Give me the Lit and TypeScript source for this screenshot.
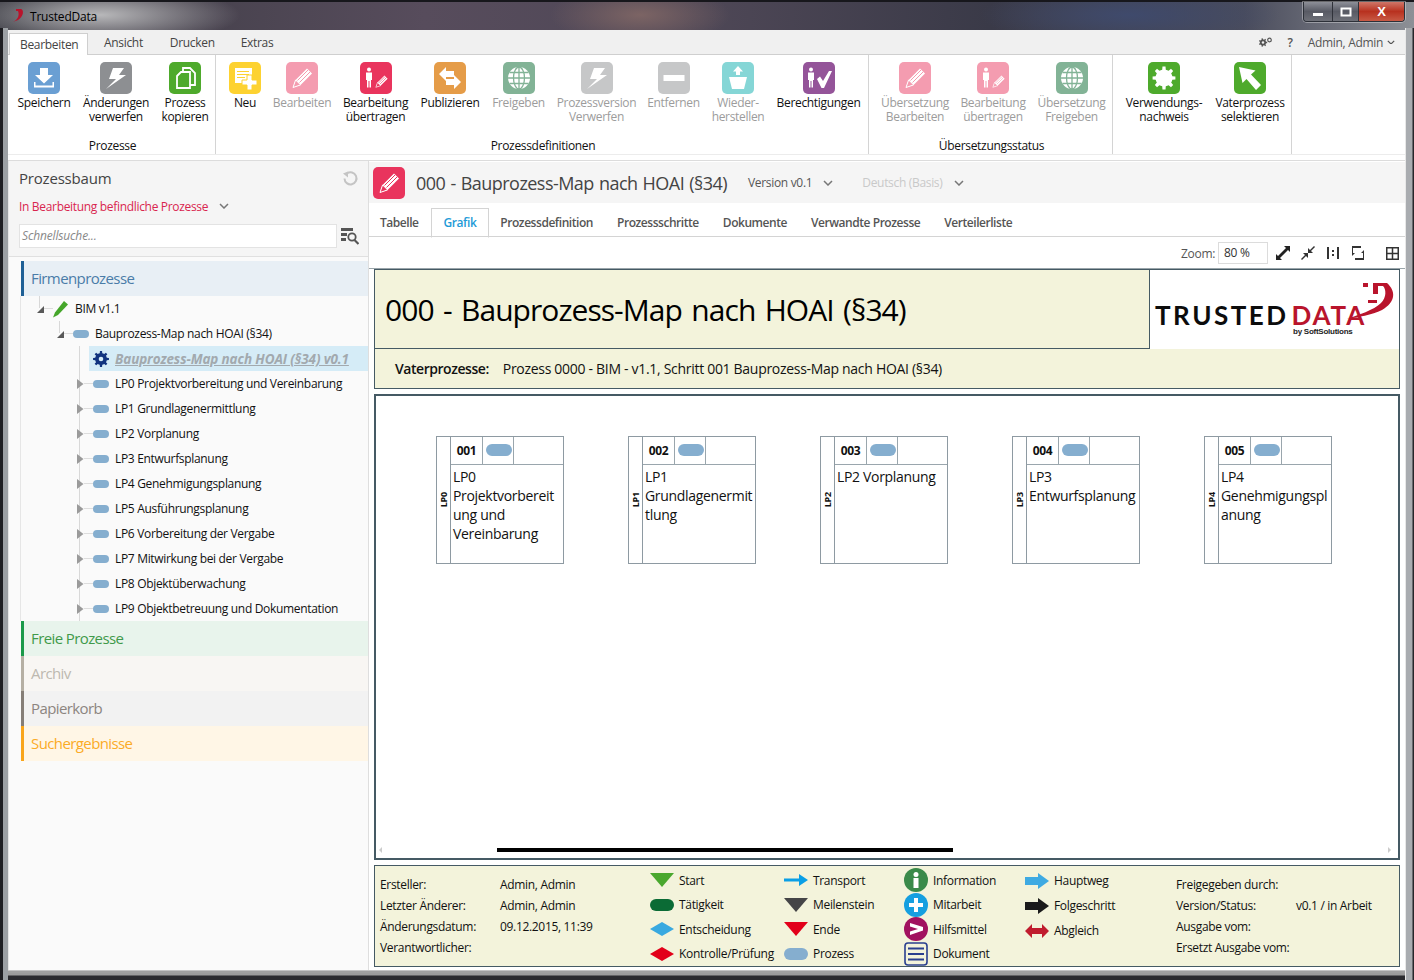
import { LitElement, html, css, svg } from "lit";
import { customElement } from "lit/decorators.js";

const gearPath = (cx: number, cy: number, r: number, teeth: number) => {
  const pts: string[] = [];
  const step = (Math.PI * 2) / teeth;
  for (let i = 0; i < teeth; i++) {
    const a = i * step;
    const ro = r, ri = r * 0.74;
    const p = [
      [ri, a - step * 0.5], [ri, a - step * 0.27], [ro, a - step * 0.17], [ro, a + step * 0.17], [ri, a + step * 0.27],
    ];
    for (const [rr, t] of p) pts.push(`${(cx + rr * Math.cos(t)).toFixed(2)},${(cy + rr * Math.sin(t)).toFixed(2)}`);
  }
  return pts.join(" ");
};

const pencil = (c: string) => svg`<path d="M7 25.5l2.6-7.6L21 6.5l5 5-11.4 11.4z" fill="#fff"/><path d="M7 25.5l2.6-7.6 5 5z" fill="${c}" stroke="#fff"/><path d="M11.5 18.5L22 8M13.5 20.500L24 10" stroke="${c}" stroke-width="1"/>`;
const person = (x = 0) => svg`<g transform="translate(${x} 0)" fill="#fff"><circle cx="9" cy="7.500" r="2"/><path d="M6 10.500h6v7.500h-1v7.500H9.500V19h-1v6.500H7V18H6z"/></g>`;
const globe = (c: string) => svg`<circle cx="16" cy="16" r="11" fill="#fff"/><g fill="none" stroke="${c}" stroke-width="1.300"><ellipse cx="16" cy="16" rx="5.500" ry="11"/><path d="M16 5v22M5 16h22M6.500 10.500h19M6.500 21.500h19"/></g>`;
const bolt = svg`<path d="M13 6h11l-5 7h7L6 27l10-10H9z" fill="#fff"/>`;

const tiles: Record<string, (c: string) => unknown> = {
  save: () => svg`<path d="M12 6h8v7h5l-9 8.500L7 13h5z" fill="#fff"/><path d="M6 20v5.500h20V20h-1.500v3.500h-17V20z" fill="#fff"/>`,
  bolt: () => bolt,
  copy: () => svg`<g fill="none" stroke="#fff" stroke-width="1.800"><path d="M14 10V6h7l5 5v12h-5"/><path d="M8 14l4-4h9v16H8z" fill="none"/></g>`,
  neu: (c) => svg`<path d="M6 6h17v15H6z" fill="#fff"/><path d="M8 9.500h12M8 12.500h12M8 15.500h8" stroke="${c}" stroke-width="1.200"/><path d="M18 13h5v5h5v5h-5v5h-5v-5h-5v-5h5z" fill="#fff" stroke="${c}" stroke-width="1"/>`,
  pencil: (c) => pencil(c),
  personpen: (c) => svg`${person(0)}<g transform="translate(11.500 9.500) scale(.62)">${pencil(c)}</g>`,
  publish: () => svg`<path d="M5 12l7-7v4h8v6h-8v4z" fill="#fff"/><path d="M27 20l-7 7v-4h-8v-6h8v-4z" fill="#fff"/>`,
  globe: (c) => globe(c),
  minus: () => svg`<rect x="5.500" y="13" width="21" height="6" fill="#fff"/>`,
  restore: () => svg`<path d="M16 4l5 5.500h-3V13h-4V9.500h-3z" fill="#fff"/><path d="M7 15h18l-3 12H10z" fill="#fff"/>`,
  perm: () => svg`${person(-1)}<path d="M14 17l3-2.500 3 4.500 6-10h3l-8 17h-2.500z" fill="#fff"/>`,
  gear: () => svg`<polygon points="${gearPath(16, 16, 11.500, 8)}" fill="#fff"/>`,
  cursor: () => svg`<path d="M5 5l16.500 3.500-4.500 4 10 10.500-5 5-9.500-11-4 4z" fill="#fff"/>`,
};

type Item = { w: number; color: string; icon: string; lines: string[]; off?: boolean };
const groups: { w: number; pad: number; label: string; items: Item[] }[] = [
  { w: 208, pad: 10, label: "Prozesse", items: [
    { w: 52, color: "#6a9fd3", icon: "save", lines: ["Speichern"] },
    { w: 66, color: "#8d8f92", icon: "bolt", lines: ["Änderungen", "verwerfen"] },
    { w: 46, color: "#4eaa2c", icon: "copy", lines: ["Prozess", "kopieren"] },
  ]},
  { w: 653, pad: 13, label: "Prozessdefinitionen", items: [
    { w: 32, color: "#fdd231", icon: "neu", lines: ["Neu"] },
    { w: 56, color: "#f49cb0", icon: "pencil", lines: ["Bearbeiten"], off: true },
    { w: 65, color: "#e9345d", icon: "personpen", lines: ["Bearbeitung", "übertragen"] },
    { w: 58, color: "#e59c48", icon: "publish", lines: ["Publizieren"] },
    { w: 53, color: "#82b396", icon: "globe", lines: ["Freigeben"], off: true },
    { w: 77, color: "#c6c7c8", icon: "bolt", lines: ["Prozessversion", "Verwerfen"], off: true },
    { w: 51, color: "#c6c7c8", icon: "minus", lines: ["Entfernen"], off: true },
    { w: 52, color: "#85d6d6", icon: "restore", lines: ["Wieder-", "herstellen"], off: true },
    { w: 83, color: "#945499", icon: "perm", lines: ["Berechtigungen"] },
  ]},
  { w: 244, pad: 13, label: "Übersetzungsstatus", items: [
    { w: 66, color: "#f49cb0", icon: "pencil", lines: ["Übersetzung", "Bearbeiten"], off: true },
    { w: 64, color: "#f49cb0", icon: "personpen", lines: ["Bearbeitung", "übertragen"], off: true },
    { w: 67, color: "#82b396", icon: "globe", lines: ["Übersetzung", "Freigeben"], off: true },
  ]},
  { w: 179, pad: 12, label: "", items: [
    { w: 78, color: "#4eaa2c", icon: "gear", lines: ["Verwendungs-", "nachweis"] },
    { w: 68, color: "#4eaa2c", icon: "cursor", lines: ["Vaterprozess", "selektieren"] },
  ]},
];

const steps = [
  { id: "001", lp: "LP0", lines: ["LP0", "Projektvorbereit", "ung und", "Vereinbarung"] },
  { id: "002", lp: "LP1", lines: ["LP1", "Grundlagenermit", "tlung"] },
  { id: "003", lp: "LP2", lines: ["LP2 Vorplanung"] },
  { id: "004", lp: "LP3", lines: ["LP3", "Entwurfsplanung"] },
  { id: "005", lp: "LP4", lines: ["LP4", "Genehmigungspl", "anung"] },
];

const treeLeaves = [
  "LP0 Projektvorbereitung und Vereinbarung", "LP1 Grundlagenermittlung", "LP2 Vorplanung", "LP3 Entwurfsplanung",
  "LP4 Genehmigungsplanung", "LP5 Ausführungsplanung", "LP6 Vorbereitung der Vergabe", "LP7 Mitwirkung bei der Vergabe",
  "LP8 Objektüberwachung", "LP9 Objektbetreuung und Dokumentation",
];

const chev = (w = 10) => html`<svg class="chev" viewBox="0 0 10 6" width=${w} height=${(w * 6) / 10}><path d="M1 1l4 4 4-4" fill="none" stroke="currentColor" stroke-width="1.500"/></svg>`;
const triOpen = html`<svg class="tri" viewBox="0 0 8 10"><path d="M8 2v7H1z" fill="#595959"/></svg>`;
const triClosed = html`<svg class="tri" viewBox="0 0 8 10"><path d="M1 0l6.500 5L1 10z" fill="#9a9a9a"/></svg>`;
const pill = html`<span class="pill"></span>`;

const legendIcons: Record<string, unknown> = {
  start: svg`<path d="M0 0h24L12 14z" fill="#4aa82e"/>`,
  act: svg`<rect y="1" width="24" height="12" rx="6" fill="#0b6b35"/>`,
  dec: svg`<path d="M0 7l12-7 12 7-12 7z" fill="#39a9e0"/>`,
  chk: svg`<path d="M0 7l12-7 12 7-12 7z" fill="#e2001a"/>`,
  trans: svg`<path d="M0 5.500h15V1l9 6-9 6V8.500H0z" fill="#0a9fe6"/>`,
  mile: svg`<path d="M0 0h24L12 14z" fill="#454547"/>`,
  end: svg`<path d="M0 0h24L12 14z" fill="#e2001a"/>`,
  proc: svg`<rect y="1" width="24" height="12" rx="6" fill="#85aecf"/>`,
  main: svg`<path d="M0 3h13V-1l11 8-11 8v-4H0z" fill="#3eaae2"/>`,
  next: svg`<path d="M0 3h13V-1l11 8-11 8v-4H0z" fill="#1a1a1a"/>`,
  sync: svg`<path d="M0 7l7-7v4h10V0l7 7-7 7v-4H7v4z" fill="#c01c2e"/>`,
};
const circleIcons: Record<string, unknown> = {
  info: svg`<circle cx="12" cy="12" r="12" fill="#3a8a4a"/><circle cx="12" cy="6.500" r="2.500" fill="#fff"/><rect x="9.500" y="10" width="5" height="10" fill="#fff"/>`,
  staff: svg`<circle cx="12" cy="12" r="12" fill="#159fe0"/><path d="M10 5h4v5h5v4h-5v5h-4v-5H5v-4h5z" fill="#fff"/>`,
  tool: svg`<circle cx="12" cy="12" r="12" fill="#a1115f"/><path d="M6 6l13 4v3.500L6 18v-3.500L14 12 6 9.500z" fill="#fff"/>`,
  doc: svg`<rect x="1" y="1" width="22" height="22" rx="3" fill="none" stroke="#2a3f8f" stroke-width="1.600"/><path d="M4 6.500h16M4 12h16M4 17.500h16" stroke="#2a3f8f" stroke-width="1.800"/>`,
};

@customElement("app-root")
export class AppRoot extends LitElement {
  static styles = css`
    :host { display: block; width: 1414px; height: 980px; overflow: hidden; position: relative; font-family: "Open Sans", "Noto Sans", sans-serif; font-size: 12px; letter-spacing: -0.32px; color: #111;
      background: radial-gradient(ellipse 140px 30px at 100px 15px, #b8b8ba 0, rgba(184,184,186,0) 100%), radial-gradient(ellipse 90px 30px at 640px 15px, #7c6464 0, rgba(124,100,100,0) 100%), radial-gradient(ellipse 150px 30px at 1130px 15px, #3f4a6c 0, rgba(63,74,108,0) 100%), linear-gradient(90deg, #3a3a42 0, #574c5c 30%, #4e4756 50%, #3a3a48 70%, #4a4c5c 88%, #8d9096 100%); }
    .frame-l, .frame-r { position: absolute; top: 28px; bottom: 0; }
    .frame-l { left: 0; width: 8px; background: linear-gradient(90deg, #1e1e22 0 3px, #9ca0a4 3px 8px); }
    .frame-r { right: 0; width: 9px; background: linear-gradient(90deg, #e8e8e8 0 1px, #a9acb0 1px 7px, #26262a 8px); }
    .frame-b { position: absolute; left: 8px; right: 9px; top: 970px; height: 10px; background: linear-gradient(#c4c4c4 0 1px, #a0a0a0 1px 3px, #9c9c9c 3px 5px, #2b2b2f 6px); }
    .title { height: 30px; display: flex; align-items: flex-start; padding-left: 13px; box-sizing: border-box; border-top: 2px solid #17171c; }
    .title .lg { margin: 6px 5px 0 0; }
    .title span { margin-top: 6px; color: #000; font-size: 12px; letter-spacing: -.2px; }
    .wc { margin-left: auto; margin-right: 9px; display: flex; height: 19px; border: 1px solid #2c3038; border-top: 0; border-radius: 0 0 4px 4px; overflow: hidden; box-shadow: 0 0 0 1px rgba(255,255,255,.35); }
    .wc div { display: flex; align-items: center; justify-content: center; background: linear-gradient(#8d8f98, #585a64 50%, #6e7078); border-right: 1px solid #30323a; }
    .wc .m { width: 28px; } .wc .m2 { width: 25px; } .wc .c { width: 45px; border: 0; background: linear-gradient(#cf7668, #b8311f 50%, #c85a45); color: #fff; font: bold 13px "Liberation Sans", sans-serif; }
    .client { position: absolute; left: 8px; top: 30px; width: 1397px; height: 940px; background: #fff; display: flex; flex-direction: column; }
    .menu { height: 25px; box-sizing: border-box; background: #f0f0f0; border-bottom: 1px solid #cfcfcf; display: flex; align-items: flex-end; color: #444; }
    .mt { height: 24px; line-height: 26px; padding: 0 13px; margin-right: 3px; }
    .mt.a { background: #fff; border: 1px solid #cfcfcf; border-bottom: 0; height: 22px; margin-left: 1px; margin-bottom: -1px; width: 79px; box-sizing: border-box; padding: 0 0 0 10px; line-height: 21px; }
    .mt.d { padding-left: 11px; } .mt.e { padding-left: 10px; }
    .mr { margin-left: auto; display: flex; align-items: center; height: 24px; padding-right: 10px; color: #555; }
    .mr .q { margin: 0 15px 0 16px; font-weight: 600; }
    .mr .u { margin-right: 4px; }
    .ribbon { height: 99px; display: flex; border-bottom: 1px solid #ececec; box-sizing: content-box; }
    .grp { box-sizing: border-box; border-right: 1px solid #d4d4d4; display: flex; flex-direction: column; position: relative; }
    .gi { display: flex; gap: 13px; height: 83px; padding-top: 7px; box-sizing: border-box; }
    .gl { text-align: center; height: 16px; line-height: 16px; color: #111; padding-left: 2px; }
    .rb { display: flex; flex-direction: column; align-items: center; line-height: 14px; text-align: center; white-space: nowrap; flex: none; }
    .rb svg { flex: none; margin-bottom: 2px; }
    .rb.off { color: #9c9c9c; }
    .gap { height: 5px; border-bottom: 1px solid #dcdcdc; }
    .main { flex: 1; display: grid; grid-template-columns: 361px 1fr; min-height: 0; }
    .left { background: #fafafa; border-right: 1px solid #dedede; border-left: 1px solid #e6e6e6; box-sizing: border-box; }
    .lh { background: #f5f5f5; height: 96px; box-sizing: border-box; border-bottom: 1px solid #e0e0e0; padding: 6px 9px 0 10px; }
    .lh .t { display: flex; justify-content: space-between; align-items: center; font-size: 15px; color: #444; height: 22px; letter-spacing: -.2px; }
    .lh .f { display: flex; align-items: center; gap: 11px; color: #d9254f; height: 20px; margin-top: 7px; }
    .lh .f .chev { color: #777; }
    .lh .s { display: flex; align-items: center; margin-top: 8px; gap: 4px; }
    .inp { width: 318px; height: 24px; box-sizing: border-box; background: #fff; border: 1px solid #e3e3e3; font-style: italic; color: #888; padding-left: 2px; line-height: 22px; font-size: 12px; letter-spacing: -.15px; }
    .sec { margin-left: 12px; height: 35px; box-sizing: border-box; border-left: 3px solid; padding-left: 7px; font-size: 15px; line-height: 34px; letter-spacing: -.6px; }
    .s1 { background: #e8eff5; border-color: #1f6096; color: #4a7ca8; margin-top: 4px; }
    .s2 { background: #e8f4ec; border-color: #1a9a4a; color: #3f9a4a; }
    .s3 { background: #f8f6f3; border-color: #b5afa3; color: #bdb9b0; }
    .s4 { background: #f2f2f2; border-color: #857e77; color: #8c8580; }
    .s5 { background: #fff6e6; border-color: #f9a51a; color: #fbab26; }
    .tree { margin-left: 11px; border-left: 1px solid #e6e6e6; position: relative; height: 325px; }
    .vl { position: absolute; width: 0; border-left: 1px solid #d8d8d8; }
    .v1 { left: 18px; top: 0; height: 12px; } .v2 { left: 38px; top: 25px; height: 12px; } .v3 { left: 58px; top: 50px; height: 275px; }
    .row { height: 25px; display: flex; align-items: center; position: relative; color: #111; white-space: nowrap; }
    .l1 { padding-left: 15px; } .l2 { padding-left: 35px; } .l3 { padding-left: 55px; }
    .tri { width: 8px; height: 10px; flex: none; }
    .dash { width: 9px; border-top: 1px solid #ddd; flex: none; }
    .pill { display: inline-block; width: 16px; height: 8px; border-radius: 4px; background: #85aecf; flex: none; }
    .row .tx { margin-left: 6px; }
    .sel { margin-left: 68px; background: #d5ecf7; padding-left: 4px; }
    .sel .tx { font-weight: 700; font-style: italic; text-decoration: underline; color: #a2a9ae; font-size: 13.500px; letter-spacing: -.12px; }
    .right { display: flex; flex-direction: column; min-width: 0; }
    .dh { height: 41px; background: #f5f5f5; display: flex; align-items: center; padding-left: 4px; flex: none; margin-top: 1px; }
    .dh .ti { font-size: 18px; margin-left: 11px; color: #444; letter-spacing: -.54px; word-spacing: 1px; }
    .dh .v { margin-left: 21px; color: #555; }
    .dh .chev { margin-left: 11px; color: #777; }
    .dh .lang { margin-left: 29px; color: #c9c9c9; }
    .tabs { height: 34px; flex: none; box-sizing: border-box; border-bottom: 1px solid #d4d4d4; padding: 5px 0 0 11px; display: flex; font-weight: 600; color: #555; letter-spacing: -.45px; }
    .tab { margin-right: 24px; line-height: 29px; white-space: nowrap; }
    .tab.a { border: 1px solid #d4d4d4; border-bottom: 1px solid #fff; height: 28px; box-sizing: content-box; margin: 0 11px 0 0; padding: 0 12px; color: #1f9bd7; line-height: 28px; }
    .tab.f { margin-right: 12px; }
    .tb { height: 32px; flex: none; box-sizing: border-box; border-bottom: 1px solid #9aa5aa; display: flex; align-items: center; justify-content: flex-end; padding: 1px 6px 0 0; color: #555; }
    .zi { width: 50px; height: 22px; box-sizing: border-box; border: 1px solid #dcdcdc; margin: 0 8px 0 3px; padding-left: 5px; line-height: 19px; color: #333; }
    .tb svg { margin-right: 11px; flex: none; }
    .tb svg.last { margin: 0 0 0 10px; }
    .hb { margin: 0 5px; height: 120px; flex: none; box-sizing: border-box; border: 1px solid #455a64; background: #f3f3db; display: flex; flex-direction: column; }
    .hu { display: flex; height: 79px; flex: none; }
    .ht { flex: 1; border-right: 1px solid #455a64; border-bottom: 1px solid #455a64; font-size: 30px; line-height: 80px; padding-left: 10px; color: #000; letter-spacing: -.95px; word-spacing: 2.500px; box-sizing: border-box; }
    .logo { width: 249px; flex: none; background: #fff; position: relative; box-sizing: border-box; }
    .logo svg { position: absolute; inset: 0; }
    .logo .lt { position: absolute; left: 5px; top: 35px; font-size: 26px; line-height: 20px; letter-spacing: 2.500px; font-family: Lato, "Liberation Sans", sans-serif; font-weight: 700; color: #0c0c0c; white-space: nowrap; }
    .logo .lt b { font-weight: 700; color: #b9142c; margin-left: 3px; letter-spacing: 1.800px; }
    .logo .by { position: absolute; left: 143px; top: 57px; font: bold 8px "Liberation Sans", sans-serif; letter-spacing: -.25px; color: #222; }
    .hv { flex: 1; display: flex; align-items: center; padding-left: 20px; font-size: 14px; letter-spacing: -.3px; color: #111; }
    .hv b { font-weight: 600; margin-right: 14px; letter-spacing: -.45px; }
    .cv { margin: 5px 5px 0; flex: 1; min-height: 0; box-sizing: border-box; border: 2px solid #455a64; background: #fff; position: relative; padding: 40px 60px; display: flex; gap: 64px; align-items: flex-start; }
    .card { width: 128px; height: 128px; flex: none; box-sizing: border-box; border: 1px solid #8e9aa2; display: flex; }
    .lp { width: 14px; flex: none; box-sizing: border-box; border-right: 1px solid #8e9aa2; display: flex; align-items: center; justify-content: center; }
    .lp span { writing-mode: vertical-rl; transform: rotate(180deg); font: bold 9px "Open Sans", sans-serif; letter-spacing: -.2px; color: #111; }
    .cc { flex: 1; min-width: 0; display: flex; flex-direction: column; }
    .ctop { height: 27px; flex: none; border-bottom: 1px solid #9aa6ad; display: flex; }
    .cid { width: 32px; box-sizing: border-box; border-right: 1px solid #9aa6ad; display: flex; align-items: center; justify-content: center; font-weight: 700; font-size: 12px; letter-spacing: -.3px; }
    .cic { width: 31px; box-sizing: border-box; border-right: 1px solid #9aa6ad; padding: 7px 0 0 3px; }
    .cic i { display: block; width: 26px; height: 12px; border-radius: 6px; background: #85aecf; }
    .cbody { padding: 2px 0 0 2px; font-size: 14px; line-height: 19px; letter-spacing: -.32px; white-space: nowrap; }
    .cbody div { height: 19px; }
    .sb { position: absolute; left: 121px; bottom: 6px; width: 456px; height: 4px; background: #000; }
    .sa { position: absolute; bottom: 5px; width: 0; height: 0; border: 3px solid transparent; }
    .sa.l { left: 3px; border-right-color: #ccc; border-left: 0; }
    .sa.r { right: 7px; border-left-color: #ccc; border-right: 0; }
    .ft { margin: 5px 5px 3px; height: 102px; flex: none; box-sizing: border-box; border: 1px solid #455a64; background: #f3f3db; display: flex; padding-left: 5px; }
    .info { display: grid; grid-template-columns: 120px auto; grid-auto-rows: 21px; align-content: start; padding-top: 8px; line-height: 21px; white-space: nowrap; }
    .info.a { width: 270px; flex: none; }
    .lg-col { display: flex; flex-direction: column; flex: none; padding-top: 2px; }
    .li { height: 25px; display: flex; align-items: center; white-space: nowrap; gap: 5px; }
    .li svg { flex: none; overflow: visible; }
  `;

  render() {
    return html`
      <div class="frame-l"></div><div class="frame-r"></div><div class="frame-b"></div>
      <div class="title">
        <svg class="lg" width="12" height="15" viewBox="0 0 12 15"><path d="M3 1h5c3 1 3 7-3 11L0 14c4-2 7-6 5-11H3z" fill="#b9142c"/></svg>
        <span>TrustedData</span>
        <div class="wc"><div class="m"><svg width="12" height="8"><rect x="1" y="5" width="10" height="3" fill="#fff"/></svg></div><div class="m2"><svg width="12" height="10"><rect x="1.500" y="1.500" width="9" height="7" fill="none" stroke="#fff" stroke-width="2"/></svg></div><div class="c">X</div></div>
      </div>
      <div class="client">
        <div class="menu">
          <div class="mt a">Bearbeiten</div><div class="mt">Ansicht</div><div class="mt d">Drucken</div><div class="mt e">Extras</div>
          <div class="mr">
            <svg width="14" height="10" viewBox="0 0 14 10"><polygon points="${gearPath(5, 5.500, 4.200, 7)}" fill="#555"/><circle cx="5" cy="5.500" r="1.200" fill="#f0f0f0"/><circle cx="11.500" cy="3" r="1.800" fill="none" stroke="#555" stroke-width="1.200"/></svg>
            <span class="q">?</span><span class="u">Admin, Admin</span>${chev(8)}
          </div>
        </div>
        <div class="ribbon">
          ${groups.map((g) => html`<div class="grp" style="width:${g.w}px">
            <div class="gi" style="padding-left:${g.pad}px">
              ${g.items.map((it) => html`<div class="rb ${it.off ? "off" : ""}" style="width:${it.w}px">
                <svg width="32" height="32" viewBox="0 0 32 32"><rect width="32" height="32" rx="5" fill="${it.color}"/>${tiles[it.icon](it.color)}</svg>
                ${it.lines.map((l) => html`<div>${l}</div>`)}
              </div>`)}
            </div>
            <div class="gl">${g.label}</div>
          </div>`)}
        </div>
        <div class="gap"></div>
        <div class="main">
          <div class="left">
            <div class="lh">
              <div class="t">Prozessbaum<svg width="17" height="17" viewBox="0 0 17 17"><path d="M5 3.500a6 6 0 1 1-2.500 5" fill="none" stroke="#c4c4c4" stroke-width="2"/><path d="M1 3.500l5-2v6z" fill="#c4c4c4"/></svg></div>
              <div class="f">In Bearbeitung befindliche Prozesse${chev()}</div>
              <div class="s"><div class="inp">Schnellsuche...</div>
                <svg width="18" height="18" viewBox="0 0 18 18"><path d="M0 1h12v3H0zM0 6h6v3H0zM0 11h5v3H0z" fill="#555"/><circle cx="11" cy="10" r="3.700" fill="none" stroke="#555" stroke-width="1.800"/><path d="M13.500 13l4 4" stroke="#555" stroke-width="2.200"/></svg></div>
            </div>
            <div class="sec s1">Firmenprozesse</div>
            <div class="tree">
              <span class="vl v1"></span><span class="vl v2"></span><span class="vl v3"></span>
              <div class="row l1">${triOpen}<span class="dash"></span>
                <svg width="16" height="18" viewBox="0 0 16 18"><path d="M11 1l4 3.500L5 15 0 17.500l2-5z" fill="#45a62a"/></svg><span class="tx">BIM v1.1</span></div>
              <div class="row l2">${triOpen}<span class="dash"></span>${pill}<span class="tx">Bauprozess-Map nach HOAI (§34)</span></div>
              <div class="row sel"><svg width="16" height="16" viewBox="0 0 16 16"><polygon points="${gearPath(8, 8, 8, 8)}" fill="#12347f"/><circle cx="8" cy="8" r="2.300" fill="#d5ecf7"/></svg><span class="tx">Bauprozess-Map nach HOAI (§34) v0.1</span></div>
              ${treeLeaves.map((t) => html`<div class="row l3">${triClosed}<span class="dash"></span>${pill}<span class="tx">${t}</span></div>`)}
            </div>
            <div class="sec s2">Freie Prozesse</div>
            <div class="sec s3">Archiv</div>
            <div class="sec s4">Papierkorb</div>
            <div class="sec s5">Suchergebnisse</div>
          </div>
          <div class="right">
            <div class="dh">
              <svg width="32" height="32" viewBox="0 0 32 32"><rect width="32" height="32" rx="5" fill="#e9345d"/>${pencil("#e9345d")}</svg>
              <span class="ti">000 - Bauprozess-Map nach HOAI (§34)</span>
              <span class="v">Version v0.1</span>${chev()}
              <span class="lang">Deutsch (Basis)</span>${chev()}
            </div>
            <div class="tabs">
              <div class="tab f">Tabelle</div><div class="tab a">Grafik</div><div class="tab">Prozessdefinition</div><div class="tab">Prozessschritte</div><div class="tab">Dokumente</div><div class="tab">Verwandte Prozesse</div><div class="tab">Verteilerliste</div>
            </div>
            <div class="tb">
              <span>Zoom:</span><div class="zi">80 %</div>
              <svg width="14" height="14" viewBox="0 0 14 14"><path d="M8 0h6v6l-2-2L4 12l2 2H0V8l2 2 8-8z" fill="#222"/></svg>
              <svg width="14" height="14" viewBox="0 0 14 14"><path d="M13 0l1 1-4 4 2 2H7V2l2 2zM1 14l-1-1 4-4-2-2h5v5l-2-2z" fill="#333"/></svg>
              <svg width="14" height="14" viewBox="0 0 14 14"><path d="M1 1h2v12H1zM11 1h2v12h-2zM6 4h2v2H6zM6 8h2v2H6z" fill="#333"/></svg>
              <svg width="14" height="14" viewBox="0 0 14 14"><path d="M0 0h10v2H2v5l2 0-3 3V0zM4 12h8V7h-2l3-3v10H4z" fill="#333"/></svg>
              <svg class="last" width="13" height="13" viewBox="0 0 13 13"><path d="M.75.75h11.500v11.500H.75zM6.500.75v11.500M.75 6.500h11.500" fill="none" stroke="#333" stroke-width="1.500"/></svg>
            </div>
            <div class="hb">
              <div class="hu">
                <div class="ht">000 - Bauprozess-Map nach HOAI (§34)</div>
                <div class="logo">
                  <div class="lt">TRUSTED<b>DATA</b></div>
                  <div class="by">by SoftSolutions</div>
                  <svg width="249" height="78" viewBox="0 0 249 78"><path d="M213 13h5v4h-5zM223 13h14v3h-9v8h-5zM218 30h9v3h-9z" fill="#b9142c"/><path d="M237 13c9 8 9 19-5 27-10 5-24 7-35 9 11-4 27-9 34-16 6-6 5-14 2-17z" fill="#b9142c"/></svg>
                </div>
              </div>
              <div class="hv"><b>Vaterprozesse:</b><span>Prozess 0000 - BIM - v1.1, Schritt 001 Bauprozess-Map nach HOAI (§34)</span></div>
            </div>
            <div class="cv">
              ${steps.map((s) => html`<div class="card">
                <div class="lp"><span>${s.lp}</span></div>
                <div class="cc">
                  <div class="ctop"><div class="cid">${s.id}</div><div class="cic"><i></i></div></div>
                  <div class="cbody">${s.lines.map((l) => html`<div>${l}</div>`)}</div>
                </div>
              </div>`)}
              <span class="sa l"></span><span class="sb"></span><span class="sa r"></span>
            </div>
            <div class="ft">
              <div class="info a"><span>Ersteller:</span><span>Admin, Admin</span><span>Letzter Änderer:</span><span>Admin, Admin</span><span>Änderungsdatum:</span><span>09.12.2015, 11:39</span><span>Verantwortlicher:</span><span></span></div>
              ${this.legCol(134, [["start", "Start"], ["act", "Tätigkeit"], ["dec", "Entscheidung"], ["chk", "Kontrolle/Prüfung"]])}
              ${this.legCol(120, [["trans", "Transport"], ["mile", "Meilenstein"], ["end", "Ende"], ["proc", "Prozess"]])}
              ${this.circCol(121, [["info", "Information"], ["staff", "Mitarbeit"], ["tool", "Hilfsmittel"], ["doc", "Dokument"]])}
              ${this.legCol(151, [["main", "Hauptweg"], ["next", "Folgeschritt"], ["sync", "Abgleich"]])}
              <div class="info"><span>Freigegeben durch:</span><span></span><span>Version/Status:</span><span>v0.1 / in Arbeit</span><span>Ausgabe vom:</span><span></span><span>Ersetzt Ausgabe vom:</span><span></span></div>
            </div>
          </div>
        </div>
      </div>
    `;
  }

  legCol(w: number, items: string[][]) {
    return html`<div class="lg-col" style="width:${w}px">${items.map(([k, t]) => html`<div class="li"><svg width="24" height="14" viewBox="0 0 24 14">${legendIcons[k]}</svg><span>${t}</span></div>`)}</div>`;
  }
  circCol(w: number, items: string[][]) {
    return html`<div class="lg-col" style="width:${w}px">${items.map(([k, t]) => html`<div class="li"><svg width="24" height="24" viewBox="0 0 24 24">${circleIcons[k]}</svg><span>${t}</span></div>`)}</div>`;
  }
}
